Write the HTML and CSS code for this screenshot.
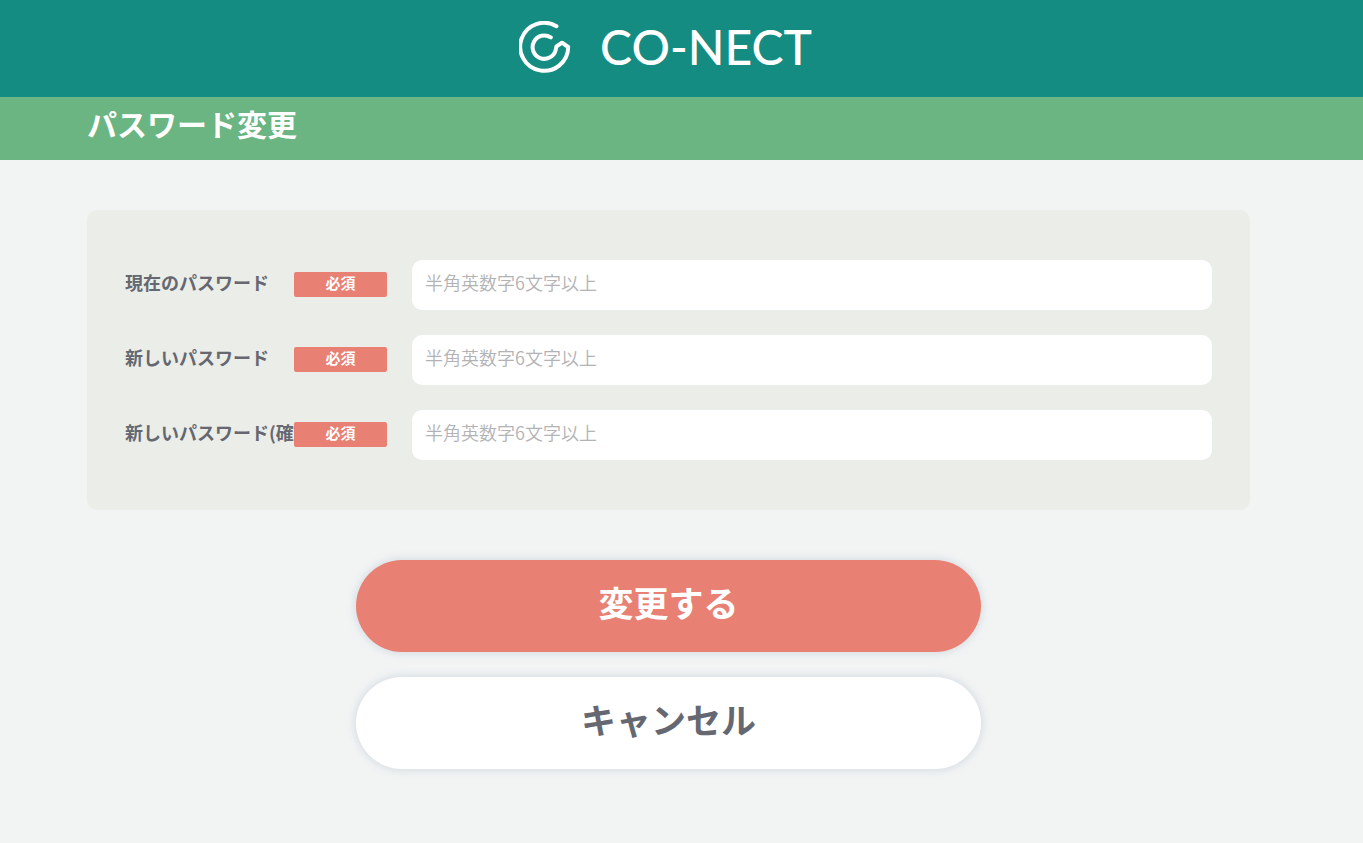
FILE: index.html
```html
<!DOCTYPE html>
<html lang="ja">
<head>
<meta charset="utf-8">
<meta name="viewport" content="width=device-width, initial-scale=1">
<title>パスワード変更 | CO-NECT</title>
<link rel="stylesheet" href="styles.css">
</head>
<body>
<header class="site-header">
  <div class="logo">
    <svg class="logo-mark" viewBox="0 0 52 52" aria-hidden="true">
      <path d="M37.5 5.2A24 24 0 1 0 49.2 26L43 21.7L37.4 25.5C37 27 37 28 36.6 29.2A11.7 11.7 0 1 1 31.8 16.4" fill="none" stroke="#fff" stroke-width="4" stroke-linecap="round" stroke-linejoin="round"/>
    </svg>
    <span class="logo-text">CO-NECT</span>
  </div>
</header>
<div class="title-bar">
  <h1 class="page-title">パスワード変更</h1>
</div>
<main class="content">
  <form class="password-form">
    <div class="panel">
      <div class="field">
        <label class="field-label" for="current">現在のパスワード</label>
        <span class="badge">必須</span>
        <input class="field-input" id="current" type="password" placeholder="半角英数字6文字以上">
      </div>
      <div class="field">
        <label class="field-label" for="new">新しいパスワード</label>
        <span class="badge">必須</span>
        <input class="field-input" id="new" type="password" placeholder="半角英数字6文字以上">
      </div>
      <div class="field">
        <label class="field-label" for="confirm">新しいパスワード(確認)</label>
        <span class="badge">必須</span>
        <input class="field-input" id="confirm" type="password" placeholder="半角英数字6文字以上">
      </div>
    </div>
    <div class="actions">
      <button class="button button-primary" type="submit">変更する</button>
      <button class="button button-secondary" type="button">キャンセル</button>
    </div>
  </form>
</main>
</body>
</html>
```
FILE: styles.css
```css
* {
  box-sizing: border-box;
}

body {
  margin: 0;
  background: #f2f4f4;
  color: #656871;
  font-family: "Noto Sans CJK JP", sans-serif;
}

.site-header {
  display: flex;
  justify-content: center;
  padding: 20px 25px 23px 0;
  background: #148c82;
}

.logo {
  display: flex;
  align-items: center;
  gap: 22px;
  min-width: 300px;
  height: 54px;
}

.logo-mark {
  width: 52px;
  height: 52px;
}

.logo-text {
  flex: 1;
  color: #fff;
  font-family: Lato, sans-serif;
  font-size: 48px;
  font-weight: 500;
  line-height: 54px;
  text-align: center;
}

.title-bar {
  padding: 6px 113px 17px 87px;
  background: #6ab581;
}

.page-title {
  margin: 0;
  color: #fff;
  font-size: 30px;
  font-weight: 700;
  line-height: 40px;
}

.content {
  padding: 50px 113px 50px 87px;
}

.panel {
  display: grid;
  gap: 25px;
  padding: 50px 38px;
  border-radius: 10px;
  background: #ebede8;
}

.field {
  display: grid;
  grid-template-columns: 169px 93px 1fr;
  align-items: center;
}

.field-label {
  min-width: 0;
  padding-bottom: 6px;
  font-size: 18px;
  font-weight: 700;
  line-height: 26px;
  white-space: nowrap;
}

/* The badge stays above a label that is longer than its column. */
.badge {
  position: relative;
  margin-bottom: 2px;
  padding-bottom: 4px;
  border-radius: 2px;
  background: #e88073;
  color: #fff;
  font-size: 15px;
  font-weight: 700;
  line-height: 21px;
  text-align: center;
}

.field-input {
  min-width: 0;
  height: 50px;
  margin-left: 25px;
  padding: 0 13px 6px;
  border: 0;
  border-radius: 10px;
  background: #fff;
  color: inherit;
  font-family: inherit;
  font-size: 18px;
}

.field-input::placeholder {
  color: #b3b3b5;
  font-weight: 350;
  opacity: 1;
}

.actions {
  display: flex;
  flex-direction: column;
  align-items: center;
  gap: 25px;
  margin-top: 50px;
}

.button {
  width: 100%;
  max-width: 625px;
  padding: 16px 20px 24px;
  border: 0;
  border-radius: 47px;
  box-shadow: 0 0 10px rgba(100, 125, 150, 0.25);
  font-family: inherit;
  font-size: 35px;
  font-weight: 700;
  line-height: 52px;
}

.button-primary {
  background: #e88073;
  color: #fff;
}

.button-secondary {
  background: #fff;
  color: #656871;
}
```
